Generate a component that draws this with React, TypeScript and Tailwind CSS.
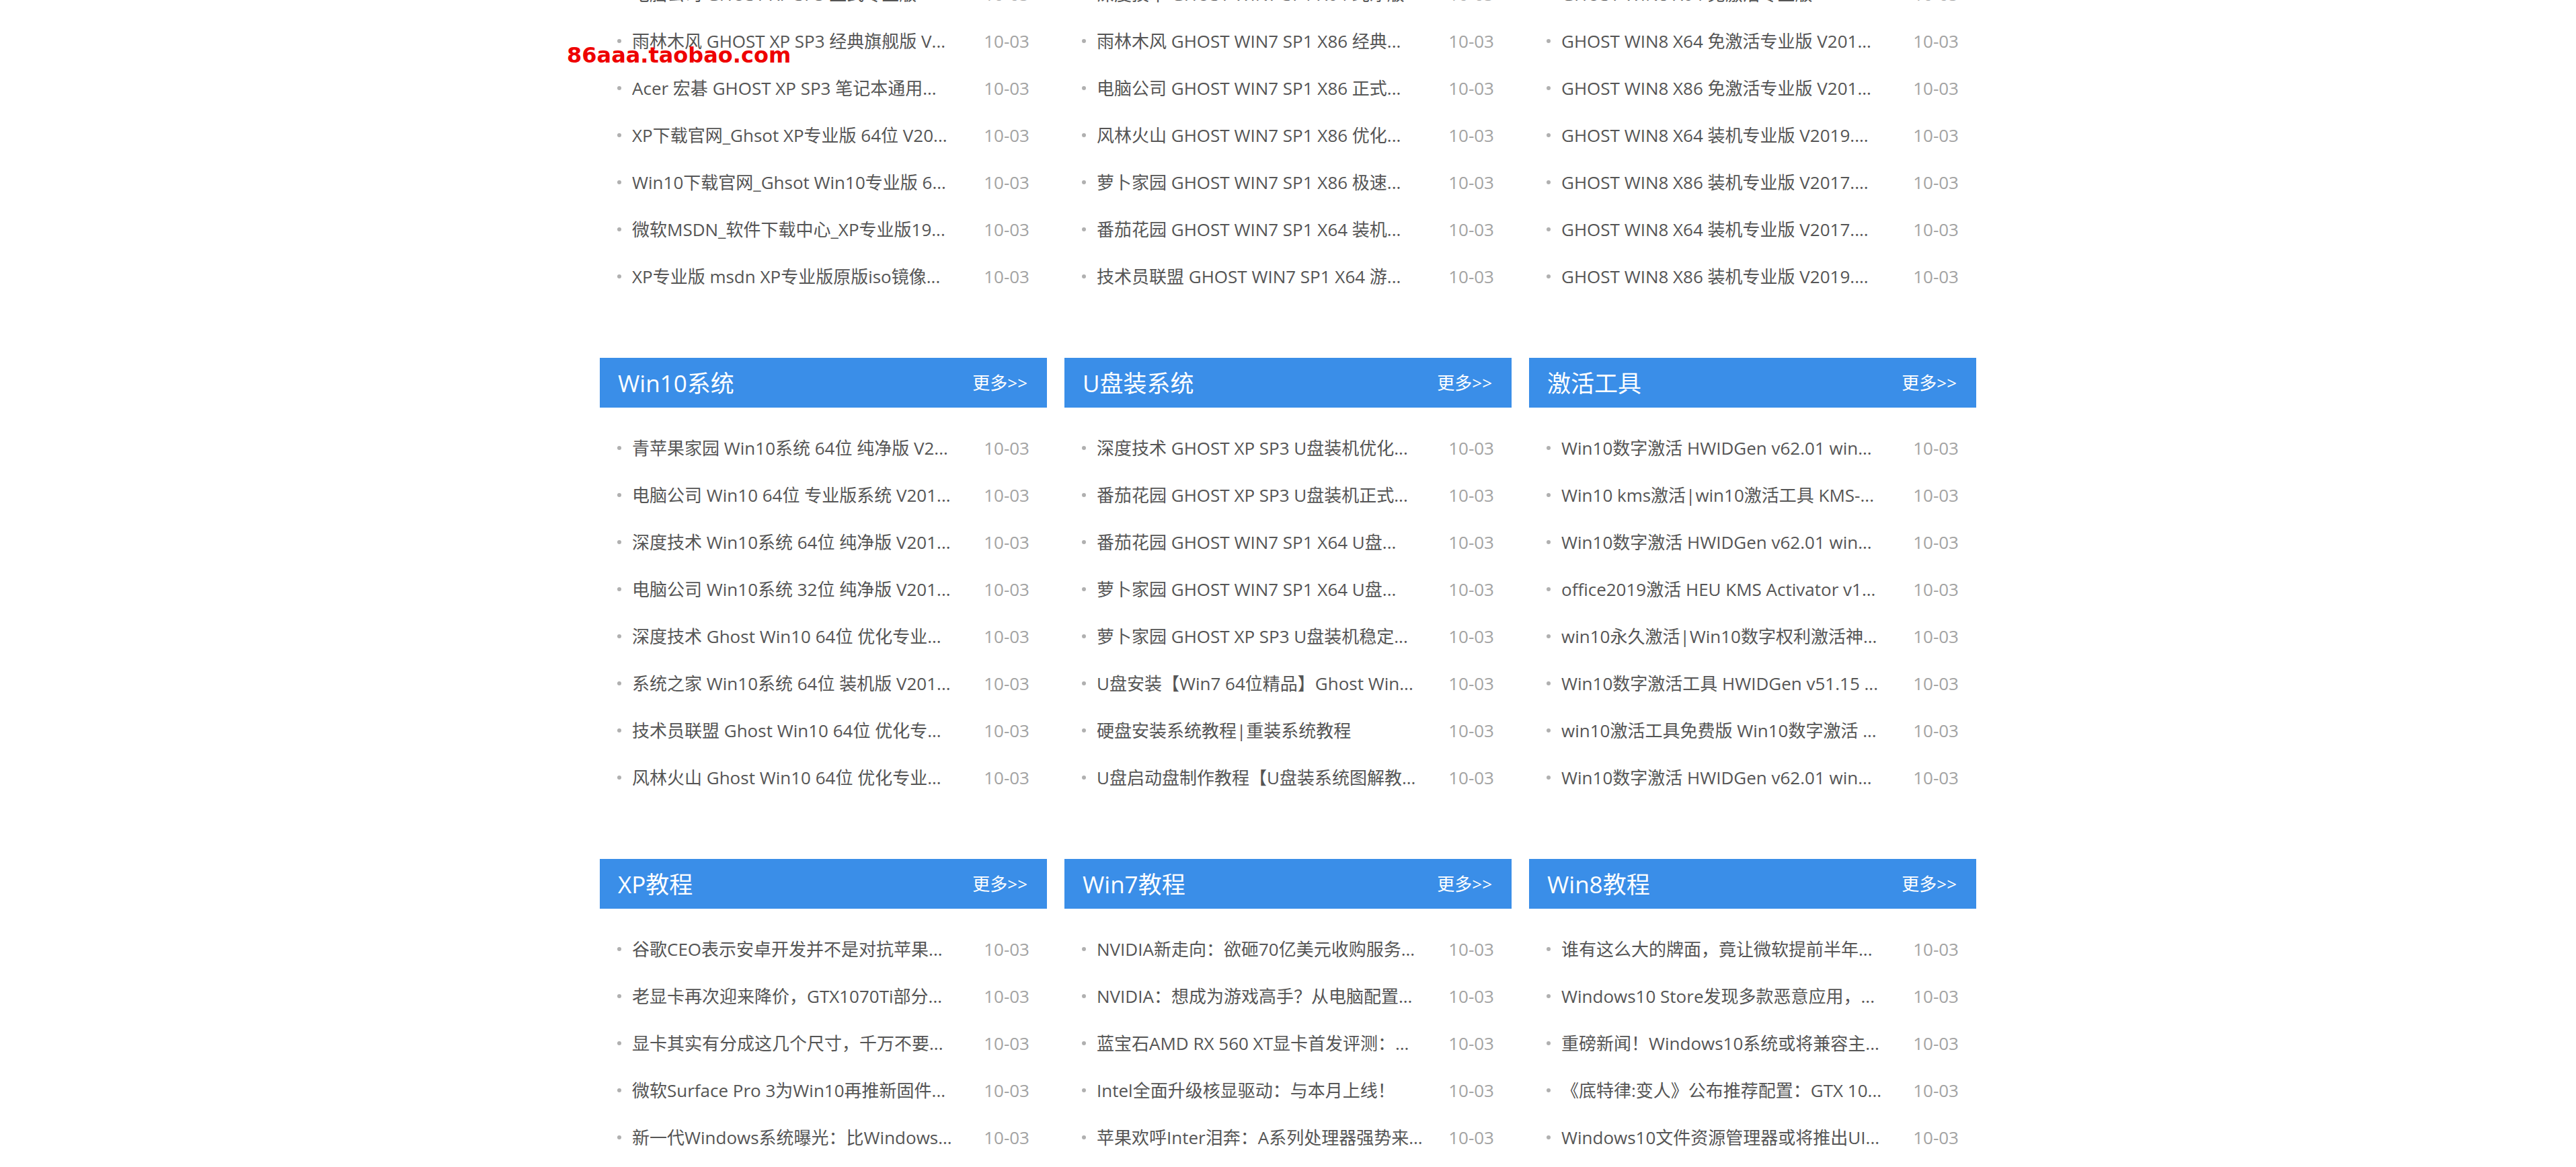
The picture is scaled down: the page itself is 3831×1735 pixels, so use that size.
type Item = { title: string; date: string };
type Block = { name: string; items: Item[] };

const d = (title: string): Item => ({ title, date: "10-03" });

const blocks: Block[] = [
  {
    name: "XP系统",
    items: [
      d("番茄花园 GHOST XP SP3 装机版 V2019..."),
      d("电脑公司 GHOST XP SP3 正式专业版"),
      d("雨林木风 GHOST XP SP3 经典旗舰版 V..."),
      d("Acer 宏碁 GHOST XP SP3 笔记本通用..."),
      d("XP下载官网_Ghsot XP专业版 64位 V20..."),
      d("Win10下载官网_Ghsot Win10专业版 6..."),
      d("微软MSDN_软件下载中心_XP专业版19..."),
      d("XP专业版 msdn XP专业版原版iso镜像..."),
    ],
  },
  {
    name: "Win7系统",
    items: [
      d("番茄花园 GHOST WIN7 SP1 X64 旗舰..."),
      d("深度技术 GHOST WIN7 SP1 X64 纯净版"),
      d("雨林木风 GHOST WIN7 SP1 X86 经典..."),
      d("电脑公司 GHOST WIN7 SP1 X86 正式..."),
      d("风林火山 GHOST WIN7 SP1 X86 优化..."),
      d("萝卜家园 GHOST WIN7 SP1 X86 极速..."),
      d("番茄花园 GHOST WIN7 SP1 X64 装机..."),
      d("技术员联盟 GHOST WIN7 SP1 X64 游..."),
    ],
  },
  {
    name: "Win8系统",
    items: [
      d("GHOST WIN8 X86 免激活专业版 V201..."),
      d("GHOST WIN8 X64 免激活专业版"),
      d("GHOST WIN8 X64 免激活专业版 V201..."),
      d("GHOST WIN8 X86 免激活专业版 V201..."),
      d("GHOST WIN8 X64 装机专业版 V2019...."),
      d("GHOST WIN8 X86 装机专业版 V2017...."),
      d("GHOST WIN8 X64 装机专业版 V2017...."),
      d("GHOST WIN8 X86 装机专业版 V2019...."),
    ],
  },
  {
    name: "Win10系统",
    items: [
      d("青苹果家园 Win10系统 64位 纯净版 V2..."),
      d("电脑公司 Win10 64位 专业版系统 V201..."),
      d("深度技术 Win10系统 64位 纯净版 V201..."),
      d("电脑公司 Win10系统 32位 纯净版 V201..."),
      d("深度技术 Ghost Win10 64位 优化专业..."),
      d("系统之家 Win10系统 64位 装机版 V201..."),
      d("技术员联盟 Ghost Win10 64位 优化专..."),
      d("风林火山 Ghost Win10 64位 优化专业..."),
    ],
  },
  {
    name: "U盘装系统",
    items: [
      d("深度技术 GHOST XP SP3 U盘装机优化..."),
      d("番茄花园 GHOST XP SP3 U盘装机正式..."),
      d("番茄花园 GHOST WIN7 SP1 X64 U盘..."),
      d("萝卜家园 GHOST WIN7 SP1 X64 U盘..."),
      d("萝卜家园 GHOST XP SP3 U盘装机稳定..."),
      d("U盘安装【Win7 64位精品】Ghost Win..."),
      d("硬盘安装系统教程|重装系统教程"),
      d("U盘启动盘制作教程【U盘装系统图解教..."),
    ],
  },
  {
    name: "激活工具",
    items: [
      d("Win10数字激活 HWIDGen v62.01 win..."),
      d("Win10 kms激活|win10激活工具 KMS-..."),
      d("Win10数字激活 HWIDGen v62.01 win..."),
      d("office2019激活 HEU KMS Activator v1..."),
      d("win10永久激活|Win10数字权利激活神..."),
      d("Win10数字激活工具 HWIDGen v51.15 ..."),
      d("win10激活工具免费版 Win10数字激活 ..."),
      d("Win10数字激活 HWIDGen v62.01 win..."),
    ],
  },
  {
    name: "XP教程",
    items: [
      d("谷歌CEO表示安卓开发并不是对抗苹果..."),
      d("老显卡再次迎来降价，GTX1070Ti部分..."),
      d("显卡其实有分成这几个尺寸，千万不要..."),
      d("微软Surface Pro 3为Win10再推新固件..."),
      d("新一代Windows系统曝光：比Windows..."),
      d("微软发布Windows 10新预览版..."),
      d("XP系统如何设置开机密码"),
      d("XP系统桌面图标不见了怎么办"),
    ],
  },
  {
    name: "Win7教程",
    items: [
      d("NVIDIA新走向：欲砸70亿美元收购服务..."),
      d("NVIDIA：想成为游戏高手？从电脑配置..."),
      d("蓝宝石AMD RX 560 XT显卡首发评测：..."),
      d("Intel全面升级核显驱动：与本月上线！"),
      d("苹果欢呼Inter泪奔：A系列处理器强势来..."),
      d("Win7系统如何关闭自动更新"),
      d("Win7系统开机慢怎么解决"),
      d("Win7系统怎么设置屏幕保护"),
    ],
  },
  {
    name: "Win8教程",
    items: [
      d("谁有这么大的牌面，竟让微软提前半年..."),
      d("Windows10 Store发现多款恶意应用，..."),
      d("重磅新闻！Windows10系统或将兼容主..."),
      d("《底特律:变人》公布推荐配置：GTX 10..."),
      d("Windows10文件资源管理器或将推出UI..."),
      d("Win8系统如何进入安全模式"),
      d("Win8系统怎么关闭磁贴"),
      d("Win8系统如何升级到Win10"),
    ],
  },
];

const font = "font-['Open_Sans','Noto_Sans_CJK_SC',sans-serif]";

function Card({ block }: { block: Block }) {
  return (
    <div>
      <div className="h-[74px] bg-[#3a8ee8] flex items-center justify-between pl-[27px] pr-[29px] text-white">
        <span className="text-[35px] leading-none">{block.name}</span>
        <span className="text-[26px] leading-none">更多&gt;&gt;</span>
      </div>
      <ul className="pt-[25px]">
        {block.items.map((item, i) => (
          <li key={i} className="h-[70px] flex items-center pl-[26px] pr-[26px]">
            <span className="w-[6px] h-[6px] rounded-full bg-[#b0b0b0] shrink-0 mr-[16px]" />
            <span className="flex-1 min-w-0 truncate text-[26px] text-[#555555] pr-[20px]">{item.title}</span>
            <span className="shrink-0 text-[26px] text-[#a3a3a3]">{item.date}</span>
          </li>
        ))}
      </ul>
    </div>
  );
}

export default function App() {
  return (
    <div className={`relative min-h-screen bg-white overflow-hidden ${font}`}>
      <div className="w-[2047px] mx-auto -mt-[213px] grid grid-cols-[665px_665px_665px] gap-x-[26px] gap-y-[86px]">
        {blocks.map((b) => (
          <Card key={b.name} block={b} />
        ))}
      </div>

      {/* watermark */}
      <div className="absolute left-[843px] top-[66px] font-['DejaVu_Sans',sans-serif] font-bold text-[32px] leading-none text-[#ee0000]">
        86aaa.taobao.com
      </div>
    </div>
  );
}
